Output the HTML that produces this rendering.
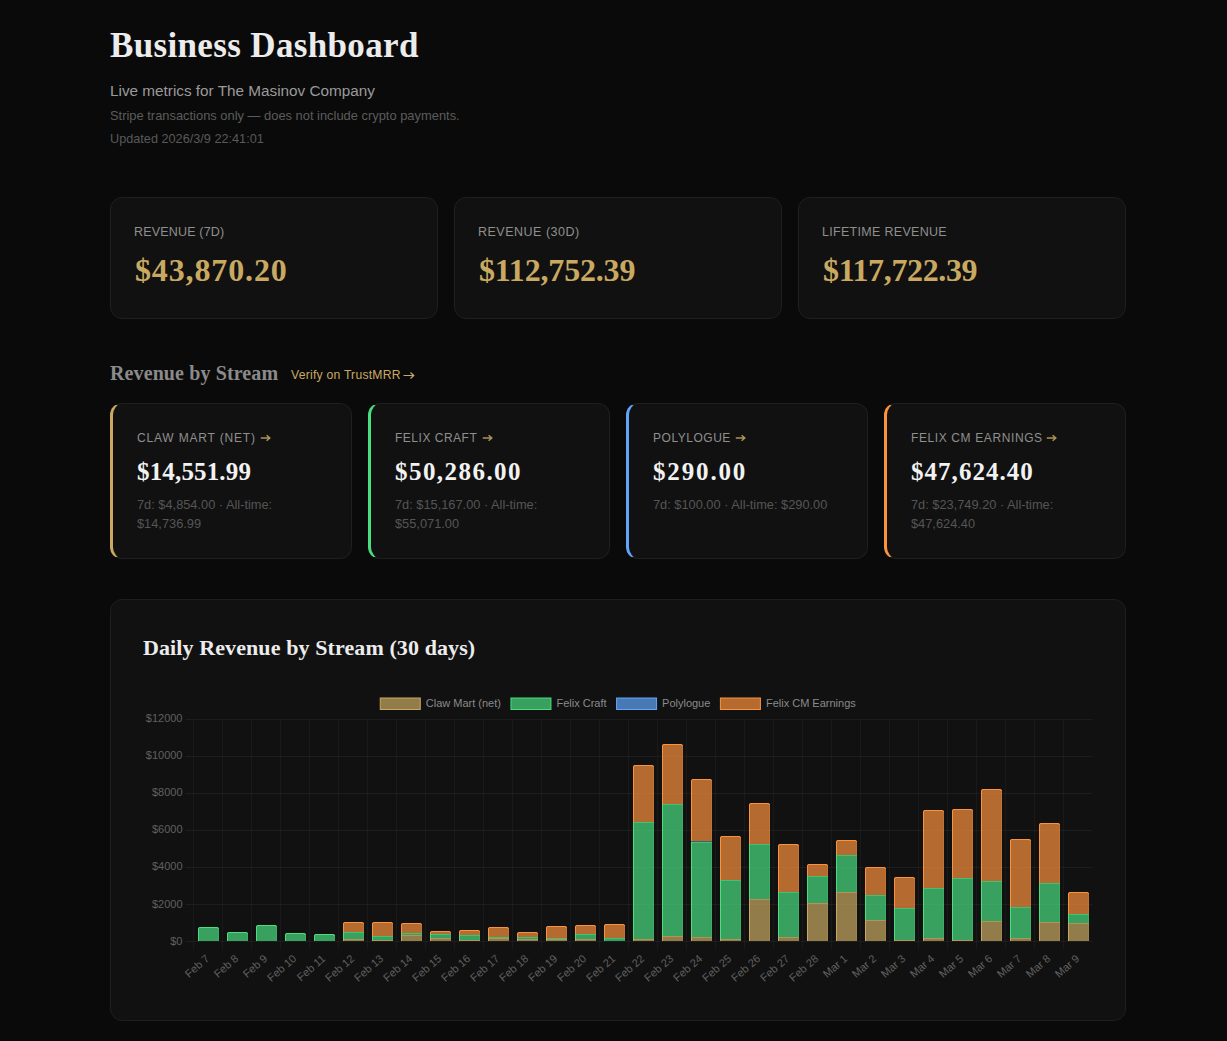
<!DOCTYPE html>
<html><head><meta charset="utf-8"><title>Business Dashboard</title>
<style>
html,body{margin:0;padding:0;background:#0a0a0a;width:1227px;height:1041px;overflow:hidden;position:relative}
.card{position:absolute;box-sizing:border-box;background:#111111;border:1px solid #1f1f1f;border-radius:12px}
.ax{font-family:'Liberation Sans', sans-serif;font-size:11px;fill:#606060}
.lg{font-family:'Liberation Sans', sans-serif;font-size:11px;fill:#8a8a8a}
</style></head><body>
<div style="position:absolute;left:110px;top:24.79px;font-family:'Liberation Serif', serif;font-size:35px;line-height:42px;color:#ececec;white-space:nowrap;font-weight:700;letter-spacing:0.35px;">Business Dashboard</div>
<div style="position:absolute;left:110px;top:81.90px;font-family:'Liberation Sans', sans-serif;font-size:15.3px;line-height:18px;color:#9a9a9a;white-space:nowrap;font-weight:400;letter-spacing:0px;">Live metrics for The Masinov Company</div>
<div style="position:absolute;left:110px;top:108.03px;font-family:'Liberation Sans', sans-serif;font-size:12.9px;line-height:15px;color:#5c5c5c;white-space:nowrap;font-weight:400;letter-spacing:0px;">Stripe transactions only — does not include crypto payments.</div>
<div style="position:absolute;left:110px;top:132.10px;font-family:'Liberation Sans', sans-serif;font-size:12.7px;line-height:15px;color:#595959;white-space:nowrap;font-weight:400;letter-spacing:0px;">Updated 2026/3/9 22:41:01</div>
<div class="card" style="left:110px;top:197px;width:328px;height:122px;"></div>
<div style="position:absolute;left:134px;top:224.67px;font-family:'Liberation Sans', sans-serif;font-size:12.5px;line-height:15px;color:#8f8f8f;white-space:nowrap;font-weight:400;letter-spacing:0.18px;">REVENUE (7D)</div>
<div style="position:absolute;left:135px;top:251.20px;font-family:'Liberation Serif', serif;font-size:32px;line-height:38px;color:#c9a961;white-space:nowrap;font-weight:700;letter-spacing:0.87px;">$43,870.20</div>
<div class="card" style="left:454px;top:197px;width:328px;height:122px;"></div>
<div style="position:absolute;left:478px;top:224.67px;font-family:'Liberation Sans', sans-serif;font-size:12.5px;line-height:15px;color:#8f8f8f;white-space:nowrap;font-weight:400;letter-spacing:0.5px;">REVENUE (30D)</div>
<div style="position:absolute;left:479px;top:251.20px;font-family:'Liberation Serif', serif;font-size:32px;line-height:38px;color:#c9a961;white-space:nowrap;font-weight:700;letter-spacing:-0.18px;">$112,752.39</div>
<div class="card" style="left:798px;top:197px;width:328px;height:122px;"></div>
<div style="position:absolute;left:822px;top:224.67px;font-family:'Liberation Sans', sans-serif;font-size:12.5px;line-height:15px;color:#8f8f8f;white-space:nowrap;font-weight:400;letter-spacing:0.3px;">LIFETIME REVENUE</div>
<div style="position:absolute;left:823px;top:251.20px;font-family:'Liberation Serif', serif;font-size:32px;line-height:38px;color:#c9a961;white-space:nowrap;font-weight:700;letter-spacing:-0.37px;">$117,722.39</div>
<div style="position:absolute;left:110px;top:360.55px;font-family:'Liberation Serif', serif;font-size:20px;line-height:24px;color:#8a8a8a;white-space:nowrap;font-weight:700;letter-spacing:0.11px;">Revenue by Stream</div>
<div style="position:absolute;left:291px;top:367.57px;font-family:'Liberation Sans', sans-serif;font-size:12.2px;line-height:15px;color:#c9a961;white-space:nowrap;font-weight:400;letter-spacing:0.23px;">Verify on TrustMRR</div>
<div style="position:absolute;left:402.6px;top:370.6px;width:12px;height:8px"><svg width="12" height="8" viewBox="0 0 12 8" style="display:block"><path d="M0.5 4.5H10.5M7.5 1.5L10.8 4.5L7.5 7.5" fill="none" stroke="#c9a961" stroke-width="1.2"/></svg></div>
<div class="card" style="left:110px;top:403px;width:242px;height:156px;border-left:3px solid #c9a961;"></div>
<div style="position:absolute;left:137px;top:431.34px;font-family:'Liberation Sans', sans-serif;font-size:12px;line-height:14px;color:#8f8f8f;white-space:nowrap;font-weight:400;letter-spacing:0.82px;">CLAW MART (NET)</div>
<div style="position:absolute;left:260.3px;top:434px;width:12px;height:8px"><svg width="12" height="8" viewBox="0 0 12 8" style="display:block"><path d="M0.8 4H9.6M6.6 1.2L9.8 4L6.6 6.8" fill="none" stroke="#c9a961" stroke-opacity="0.85" stroke-width="1.5"/></svg></div>
<div style="position:absolute;left:137px;top:456.96px;font-family:'Liberation Serif', serif;font-size:25px;line-height:30px;color:#f2f2f2;white-space:nowrap;font-weight:700;letter-spacing:0.16px;">$14,551.99</div>
<div style="position:absolute;left:137px;top:497.06px;font-family:'Liberation Sans', sans-serif;font-size:12.8px;line-height:15px;color:#555555;white-space:nowrap;font-weight:400;letter-spacing:0px;">7d: $4,854.00 · All-time:</div>
<div style="position:absolute;left:137px;top:516.06px;font-family:'Liberation Sans', sans-serif;font-size:12.8px;line-height:15px;color:#555555;white-space:nowrap;font-weight:400;letter-spacing:0px;">$14,736.99</div>
<div class="card" style="left:368px;top:403px;width:242px;height:156px;border-left:3px solid #4ade80;"></div>
<div style="position:absolute;left:395px;top:431.34px;font-family:'Liberation Sans', sans-serif;font-size:12px;line-height:14px;color:#8f8f8f;white-space:nowrap;font-weight:400;letter-spacing:0.51px;">FELIX CRAFT</div>
<div style="position:absolute;left:481.7px;top:434px;width:12px;height:8px"><svg width="12" height="8" viewBox="0 0 12 8" style="display:block"><path d="M0.8 4H9.6M6.6 1.2L9.8 4L6.6 6.8" fill="none" stroke="#c9a961" stroke-opacity="0.85" stroke-width="1.5"/></svg></div>
<div style="position:absolute;left:395px;top:456.96px;font-family:'Liberation Serif', serif;font-size:25px;line-height:30px;color:#f2f2f2;white-space:nowrap;font-weight:700;letter-spacing:1.45px;">$50,286.00</div>
<div style="position:absolute;left:395px;top:497.06px;font-family:'Liberation Sans', sans-serif;font-size:12.8px;line-height:15px;color:#555555;white-space:nowrap;font-weight:400;letter-spacing:0px;">7d: $15,167.00 · All-time:</div>
<div style="position:absolute;left:395px;top:516.06px;font-family:'Liberation Sans', sans-serif;font-size:12.8px;line-height:15px;color:#555555;white-space:nowrap;font-weight:400;letter-spacing:0px;">$55,071.00</div>
<div class="card" style="left:626px;top:403px;width:242px;height:156px;border-left:3px solid #60a5fa;"></div>
<div style="position:absolute;left:653px;top:431.34px;font-family:'Liberation Sans', sans-serif;font-size:12px;line-height:14px;color:#8f8f8f;white-space:nowrap;font-weight:400;letter-spacing:0.53px;">POLYLOGUE</div>
<div style="position:absolute;left:735.2px;top:434px;width:12px;height:8px"><svg width="12" height="8" viewBox="0 0 12 8" style="display:block"><path d="M0.8 4H9.6M6.6 1.2L9.8 4L6.6 6.8" fill="none" stroke="#c9a961" stroke-opacity="0.85" stroke-width="1.5"/></svg></div>
<div style="position:absolute;left:653px;top:456.96px;font-family:'Liberation Serif', serif;font-size:25px;line-height:30px;color:#f2f2f2;white-space:nowrap;font-weight:700;letter-spacing:1.85px;">$290.00</div>
<div style="position:absolute;left:653px;top:497.06px;font-family:'Liberation Sans', sans-serif;font-size:12.8px;line-height:15px;color:#555555;white-space:nowrap;font-weight:400;letter-spacing:0px;">7d: $100.00 · All-time: $290.00</div>
<div class="card" style="left:884px;top:403px;width:242px;height:156px;border-left:3px solid #fb923c;"></div>
<div style="position:absolute;left:911px;top:431.34px;font-family:'Liberation Sans', sans-serif;font-size:12px;line-height:14px;color:#8f8f8f;white-space:nowrap;font-weight:400;letter-spacing:0.61px;">FELIX CM EARNINGS</div>
<div style="position:absolute;left:1046.4px;top:434px;width:12px;height:8px"><svg width="12" height="8" viewBox="0 0 12 8" style="display:block"><path d="M0.8 4H9.6M6.6 1.2L9.8 4L6.6 6.8" fill="none" stroke="#c9a961" stroke-opacity="0.85" stroke-width="1.5"/></svg></div>
<div style="position:absolute;left:911px;top:456.96px;font-family:'Liberation Serif', serif;font-size:25px;line-height:30px;color:#f2f2f2;white-space:nowrap;font-weight:700;letter-spacing:1.04px;">$47,624.40</div>
<div style="position:absolute;left:911px;top:497.06px;font-family:'Liberation Sans', sans-serif;font-size:12.8px;line-height:15px;color:#555555;white-space:nowrap;font-weight:400;letter-spacing:0px;">7d: $23,749.20 · All-time:</div>
<div style="position:absolute;left:911px;top:516.06px;font-family:'Liberation Sans', sans-serif;font-size:12.8px;line-height:15px;color:#555555;white-space:nowrap;font-weight:400;letter-spacing:0px;">$47,624.40</div>
<div class="card" style="left:110px;top:599px;width:1016px;height:422px;"></div>
<div style="position:absolute;left:143px;top:634.68px;font-family:'Liberation Serif', serif;font-size:22px;line-height:26px;color:#ececec;white-space:nowrap;font-weight:700;letter-spacing:0.1px;">Daily Revenue by Stream (30 days)</div>
<svg width="1227" height="1041" viewBox="0 0 1227 1041" style="position:absolute;left:0;top:0">
<line x1="185.5" x2="1092.5" y1="941.5" y2="941.5" stroke="rgba(255,255,255,0.05)" stroke-width="1"/>
<text x="182.5" y="945.3" text-anchor="end" class="ax">$0</text>
<line x1="185.5" x2="1092.5" y1="904.5" y2="904.5" stroke="rgba(255,255,255,0.05)" stroke-width="1"/>
<text x="182.5" y="908.4" text-anchor="end" class="ax">$2000</text>
<line x1="185.5" x2="1092.5" y1="867.5" y2="867.5" stroke="rgba(255,255,255,0.05)" stroke-width="1"/>
<text x="182.5" y="869.5" text-anchor="end" class="ax">$4000</text>
<line x1="185.5" x2="1092.5" y1="830.5" y2="830.5" stroke="rgba(255,255,255,0.05)" stroke-width="1"/>
<text x="182.5" y="832.6" text-anchor="end" class="ax">$6000</text>
<line x1="185.5" x2="1092.5" y1="793.5" y2="793.5" stroke="rgba(255,255,255,0.05)" stroke-width="1"/>
<text x="182.5" y="795.6" text-anchor="end" class="ax">$8000</text>
<line x1="185.5" x2="1092.5" y1="756.5" y2="756.5" stroke="rgba(255,255,255,0.05)" stroke-width="1"/>
<text x="182.5" y="758.7" text-anchor="end" class="ax">$10000</text>
<line x1="185.5" x2="1092.5" y1="719.5" y2="719.5" stroke="rgba(255,255,255,0.05)" stroke-width="1"/>
<text x="182.5" y="721.8" text-anchor="end" class="ax">$12000</text>
<line x1="193.5" x2="193.5" y1="719.6" y2="949.5" stroke="rgba(255,255,255,0.035)" stroke-width="1"/>
<line x1="222.5" x2="222.5" y1="719.6" y2="949.5" stroke="rgba(255,255,255,0.035)" stroke-width="1"/>
<line x1="251.5" x2="251.5" y1="719.6" y2="949.5" stroke="rgba(255,255,255,0.035)" stroke-width="1"/>
<line x1="280.5" x2="280.5" y1="719.6" y2="949.5" stroke="rgba(255,255,255,0.035)" stroke-width="1"/>
<line x1="309.5" x2="309.5" y1="719.6" y2="949.5" stroke="rgba(255,255,255,0.035)" stroke-width="1"/>
<line x1="338.5" x2="338.5" y1="719.6" y2="949.5" stroke="rgba(255,255,255,0.035)" stroke-width="1"/>
<line x1="367.5" x2="367.5" y1="719.6" y2="949.5" stroke="rgba(255,255,255,0.035)" stroke-width="1"/>
<line x1="396.5" x2="396.5" y1="719.6" y2="949.5" stroke="rgba(255,255,255,0.035)" stroke-width="1"/>
<line x1="425.5" x2="425.5" y1="719.6" y2="949.5" stroke="rgba(255,255,255,0.035)" stroke-width="1"/>
<line x1="454.5" x2="454.5" y1="719.6" y2="949.5" stroke="rgba(255,255,255,0.035)" stroke-width="1"/>
<line x1="483.5" x2="483.5" y1="719.6" y2="949.5" stroke="rgba(255,255,255,0.035)" stroke-width="1"/>
<line x1="512.5" x2="512.5" y1="719.6" y2="949.5" stroke="rgba(255,255,255,0.035)" stroke-width="1"/>
<line x1="541.5" x2="541.5" y1="719.6" y2="949.5" stroke="rgba(255,255,255,0.035)" stroke-width="1"/>
<line x1="570.5" x2="570.5" y1="719.6" y2="949.5" stroke="rgba(255,255,255,0.035)" stroke-width="1"/>
<line x1="599.5" x2="599.5" y1="719.6" y2="949.5" stroke="rgba(255,255,255,0.035)" stroke-width="1"/>
<line x1="628.5" x2="628.5" y1="719.6" y2="949.5" stroke="rgba(255,255,255,0.035)" stroke-width="1"/>
<line x1="657.5" x2="657.5" y1="719.6" y2="949.5" stroke="rgba(255,255,255,0.035)" stroke-width="1"/>
<line x1="686.5" x2="686.5" y1="719.6" y2="949.5" stroke="rgba(255,255,255,0.035)" stroke-width="1"/>
<line x1="715.5" x2="715.5" y1="719.6" y2="949.5" stroke="rgba(255,255,255,0.035)" stroke-width="1"/>
<line x1="744.5" x2="744.5" y1="719.6" y2="949.5" stroke="rgba(255,255,255,0.035)" stroke-width="1"/>
<line x1="773.5" x2="773.5" y1="719.6" y2="949.5" stroke="rgba(255,255,255,0.035)" stroke-width="1"/>
<line x1="802.5" x2="802.5" y1="719.6" y2="949.5" stroke="rgba(255,255,255,0.035)" stroke-width="1"/>
<line x1="831.5" x2="831.5" y1="719.6" y2="949.5" stroke="rgba(255,255,255,0.035)" stroke-width="1"/>
<line x1="860.5" x2="860.5" y1="719.6" y2="949.5" stroke="rgba(255,255,255,0.035)" stroke-width="1"/>
<line x1="889.5" x2="889.5" y1="719.6" y2="949.5" stroke="rgba(255,255,255,0.035)" stroke-width="1"/>
<line x1="918.5" x2="918.5" y1="719.6" y2="949.5" stroke="rgba(255,255,255,0.035)" stroke-width="1"/>
<line x1="947.5" x2="947.5" y1="719.6" y2="949.5" stroke="rgba(255,255,255,0.035)" stroke-width="1"/>
<line x1="976.5" x2="976.5" y1="719.6" y2="949.5" stroke="rgba(255,255,255,0.035)" stroke-width="1"/>
<line x1="1005.5" x2="1005.5" y1="719.6" y2="949.5" stroke="rgba(255,255,255,0.035)" stroke-width="1"/>
<line x1="1034.5" x2="1034.5" y1="719.6" y2="949.5" stroke="rgba(255,255,255,0.035)" stroke-width="1"/>
<line x1="1063.5" x2="1063.5" y1="719.6" y2="949.5" stroke="rgba(255,255,255,0.035)" stroke-width="1"/>
<path d="M198.00,941.00V929.00Q198.00,927.00 200.00,927.00H217.00Q219.00,927.00 219.00,929.00V941.00Z" fill="rgba(74,222,128,0.7)"/>
<path d="M198.5,941V929.0Q198.5,927.5 200.0,927.5H217.0Q218.5,927.5 218.5,929.0" fill="none" stroke="#4ade80" stroke-width="1"/>
<line x1="218.5" x2="218.5" y1="929.5" y2="941" stroke="#4ade80" stroke-opacity="0.2" stroke-width="1"/>
<text transform="translate(210.2,959.7) rotate(-41)" text-anchor="end" class="ax">Feb 7</text>
<path d="M227.00,941.00V934.00Q227.00,932.00 229.00,932.00H246.00Q248.00,932.00 248.00,934.00V941.00Z" fill="rgba(74,222,128,0.7)"/>
<path d="M227.5,941V934.0Q227.5,932.5 229.0,932.5H246.0Q247.5,932.5 247.5,934.0" fill="none" stroke="#4ade80" stroke-width="1"/>
<line x1="247.5" x2="247.5" y1="934.5" y2="941" stroke="#4ade80" stroke-opacity="0.2" stroke-width="1"/>
<text transform="translate(239.2,959.7) rotate(-41)" text-anchor="end" class="ax">Feb 8</text>
<path d="M256.00,941.00V927.00Q256.00,925.00 258.00,925.00H275.00Q277.00,925.00 277.00,927.00V941.00Z" fill="rgba(74,222,128,0.7)"/>
<path d="M256.5,941V927.0Q256.5,925.5 258.0,925.5H275.0Q276.5,925.5 276.5,927.0" fill="none" stroke="#4ade80" stroke-width="1"/>
<line x1="276.5" x2="276.5" y1="927.5" y2="941" stroke="#4ade80" stroke-opacity="0.2" stroke-width="1"/>
<text transform="translate(268.2,959.7) rotate(-41)" text-anchor="end" class="ax">Feb 9</text>
<path d="M285.00,941.00V935.00Q285.00,933.00 287.00,933.00H304.00Q306.00,933.00 306.00,935.00V941.00Z" fill="rgba(74,222,128,0.7)"/>
<path d="M285.5,941V935.0Q285.5,933.5 287.0,933.5H304.0Q305.5,933.5 305.5,935.0" fill="none" stroke="#4ade80" stroke-width="1"/>
<line x1="305.5" x2="305.5" y1="935.5" y2="941" stroke="#4ade80" stroke-opacity="0.2" stroke-width="1"/>
<text transform="translate(297.2,959.7) rotate(-41)" text-anchor="end" class="ax">Feb 10</text>
<path d="M314.00,941.00V936.00Q314.00,934.00 316.00,934.00H333.00Q335.00,934.00 335.00,936.00V941.00Z" fill="rgba(74,222,128,0.7)"/>
<path d="M314.5,941V936.0Q314.5,934.5 316.0,934.5H333.0Q334.5,934.5 334.5,936.0" fill="none" stroke="#4ade80" stroke-width="1"/>
<line x1="334.5" x2="334.5" y1="936.5" y2="941" stroke="#4ade80" stroke-opacity="0.2" stroke-width="1"/>
<text transform="translate(326.2,959.7) rotate(-41)" text-anchor="end" class="ax">Feb 11</text>
<path d="M343.00,941.00V939.00H364.00V941.00Z" fill="rgba(201,169,97,0.7)"/>
<line x1="343.5" x2="343.5" y1="939.0" y2="941" stroke="#c9a961" stroke-width="1"/>
<line x1="344.0" x2="364.0" y1="939.5" y2="939.5" stroke="#c9a961" stroke-opacity="0.55" stroke-width="1"/>
<line x1="363.5" x2="363.5" y1="939.5" y2="941" stroke="#c9a961" stroke-opacity="0.2" stroke-width="1"/>
<path d="M343.00,939.00V932.00H364.00V939.00Z" fill="rgba(74,222,128,0.7)"/>
<line x1="343.5" x2="343.5" y1="932.0" y2="939" stroke="#4ade80" stroke-width="1"/>
<line x1="344.0" x2="364.0" y1="932.5" y2="932.5" stroke="#4ade80" stroke-opacity="0.55" stroke-width="1"/>
<line x1="363.5" x2="363.5" y1="932.5" y2="939" stroke="#4ade80" stroke-opacity="0.2" stroke-width="1"/>
<path d="M343.00,932.00V924.00Q343.00,922.00 345.00,922.00H362.00Q364.00,922.00 364.00,924.00V932.00Z" fill="rgba(251,146,60,0.7)"/>
<path d="M343.5,932V924.0Q343.5,922.5 345.0,922.5H362.0Q363.5,922.5 363.5,924.0" fill="none" stroke="#fb923c" stroke-width="1"/>
<line x1="363.5" x2="363.5" y1="924.5" y2="932" stroke="#fb923c" stroke-opacity="0.2" stroke-width="1"/>
<text transform="translate(355.2,959.7) rotate(-41)" text-anchor="end" class="ax">Feb 12</text>
<path d="M372.00,941.00V940.00H393.00V941.00Z" fill="rgba(201,169,97,0.7)"/>
<line x1="372.5" x2="372.5" y1="940.0" y2="941" stroke="#c9a961" stroke-width="1"/>
<line x1="373.0" x2="393.0" y1="940.5" y2="940.5" stroke="#c9a961" stroke-opacity="0.55" stroke-width="1"/>
<line x1="392.5" x2="392.5" y1="940.5" y2="941" stroke="#c9a961" stroke-opacity="0.2" stroke-width="1"/>
<path d="M372.00,940.00V936.00H393.00V940.00Z" fill="rgba(74,222,128,0.7)"/>
<line x1="372.5" x2="372.5" y1="936.0" y2="940" stroke="#4ade80" stroke-width="1"/>
<line x1="373.0" x2="393.0" y1="936.5" y2="936.5" stroke="#4ade80" stroke-opacity="0.55" stroke-width="1"/>
<line x1="392.5" x2="392.5" y1="936.5" y2="940" stroke="#4ade80" stroke-opacity="0.2" stroke-width="1"/>
<path d="M372.00,936.00V924.00Q372.00,922.00 374.00,922.00H391.00Q393.00,922.00 393.00,924.00V936.00Z" fill="rgba(251,146,60,0.7)"/>
<path d="M372.5,936V924.0Q372.5,922.5 374.0,922.5H391.0Q392.5,922.5 392.5,924.0" fill="none" stroke="#fb923c" stroke-width="1"/>
<line x1="392.5" x2="392.5" y1="924.5" y2="936" stroke="#fb923c" stroke-opacity="0.2" stroke-width="1"/>
<text transform="translate(384.2,959.7) rotate(-41)" text-anchor="end" class="ax">Feb 13</text>
<path d="M401.00,941.00V935.00H422.00V941.00Z" fill="rgba(201,169,97,0.7)"/>
<line x1="401.5" x2="401.5" y1="935.0" y2="941" stroke="#c9a961" stroke-width="1"/>
<line x1="402.0" x2="422.0" y1="935.5" y2="935.5" stroke="#c9a961" stroke-opacity="0.55" stroke-width="1"/>
<line x1="421.5" x2="421.5" y1="935.5" y2="941" stroke="#c9a961" stroke-opacity="0.2" stroke-width="1"/>
<path d="M401.00,935.00V933.00H422.00V935.00Z" fill="rgba(74,222,128,0.7)"/>
<line x1="401.5" x2="401.5" y1="933.0" y2="935" stroke="#4ade80" stroke-width="1"/>
<line x1="402.0" x2="422.0" y1="933.5" y2="933.5" stroke="#4ade80" stroke-opacity="0.55" stroke-width="1"/>
<line x1="421.5" x2="421.5" y1="933.5" y2="935" stroke="#4ade80" stroke-opacity="0.2" stroke-width="1"/>
<path d="M401.00,933.00V925.00Q401.00,923.00 403.00,923.00H420.00Q422.00,923.00 422.00,925.00V933.00Z" fill="rgba(251,146,60,0.7)"/>
<path d="M401.5,933V925.0Q401.5,923.5 403.0,923.5H420.0Q421.5,923.5 421.5,925.0" fill="none" stroke="#fb923c" stroke-width="1"/>
<line x1="421.5" x2="421.5" y1="925.5" y2="933" stroke="#fb923c" stroke-opacity="0.2" stroke-width="1"/>
<text transform="translate(413.2,959.7) rotate(-41)" text-anchor="end" class="ax">Feb 14</text>
<path d="M430.00,941.00V938.00H451.00V941.00Z" fill="rgba(201,169,97,0.7)"/>
<line x1="430.5" x2="430.5" y1="938.0" y2="941" stroke="#c9a961" stroke-width="1"/>
<line x1="431.0" x2="451.0" y1="938.5" y2="938.5" stroke="#c9a961" stroke-opacity="0.55" stroke-width="1"/>
<line x1="450.5" x2="450.5" y1="938.5" y2="941" stroke="#c9a961" stroke-opacity="0.2" stroke-width="1"/>
<path d="M430.00,938.00V934.00H451.00V938.00Z" fill="rgba(74,222,128,0.7)"/>
<line x1="430.5" x2="430.5" y1="934.0" y2="938" stroke="#4ade80" stroke-width="1"/>
<line x1="431.0" x2="451.0" y1="934.5" y2="934.5" stroke="#4ade80" stroke-opacity="0.55" stroke-width="1"/>
<line x1="450.5" x2="450.5" y1="934.5" y2="938" stroke="#4ade80" stroke-opacity="0.2" stroke-width="1"/>
<path d="M430.00,934.00V933.00Q430.00,931.00 432.00,931.00H449.00Q451.00,931.00 451.00,933.00V934.00Z" fill="rgba(251,146,60,0.7)"/>
<path d="M430.5,934V933.0Q430.5,931.5 432.0,931.5H449.0Q450.5,931.5 450.5,933.0" fill="none" stroke="#fb923c" stroke-width="1"/>
<line x1="450.5" x2="450.5" y1="933.5" y2="934" stroke="#fb923c" stroke-opacity="0.2" stroke-width="1"/>
<text transform="translate(442.2,959.7) rotate(-41)" text-anchor="end" class="ax">Feb 15</text>
<path d="M459.00,941.00V940.00H480.00V941.00Z" fill="rgba(201,169,97,0.7)"/>
<line x1="459.5" x2="459.5" y1="940.0" y2="941" stroke="#c9a961" stroke-width="1"/>
<line x1="460.0" x2="480.0" y1="940.5" y2="940.5" stroke="#c9a961" stroke-opacity="0.55" stroke-width="1"/>
<line x1="479.5" x2="479.5" y1="940.5" y2="941" stroke="#c9a961" stroke-opacity="0.2" stroke-width="1"/>
<path d="M459.00,940.00V935.00H480.00V940.00Z" fill="rgba(74,222,128,0.7)"/>
<line x1="459.5" x2="459.5" y1="935.0" y2="940" stroke="#4ade80" stroke-width="1"/>
<line x1="460.0" x2="480.0" y1="935.5" y2="935.5" stroke="#4ade80" stroke-opacity="0.55" stroke-width="1"/>
<line x1="479.5" x2="479.5" y1="935.5" y2="940" stroke="#4ade80" stroke-opacity="0.2" stroke-width="1"/>
<path d="M459.00,935.00V932.00Q459.00,930.00 461.00,930.00H478.00Q480.00,930.00 480.00,932.00V935.00Z" fill="rgba(251,146,60,0.7)"/>
<path d="M459.5,935V932.0Q459.5,930.5 461.0,930.5H478.0Q479.5,930.5 479.5,932.0" fill="none" stroke="#fb923c" stroke-width="1"/>
<line x1="479.5" x2="479.5" y1="932.5" y2="935" stroke="#fb923c" stroke-opacity="0.2" stroke-width="1"/>
<text transform="translate(471.2,959.7) rotate(-41)" text-anchor="end" class="ax">Feb 16</text>
<path d="M488.00,941.00V938.00H509.00V941.00Z" fill="rgba(201,169,97,0.7)"/>
<line x1="488.5" x2="488.5" y1="938.0" y2="941" stroke="#c9a961" stroke-width="1"/>
<line x1="489.0" x2="509.0" y1="938.5" y2="938.5" stroke="#c9a961" stroke-opacity="0.55" stroke-width="1"/>
<line x1="508.5" x2="508.5" y1="938.5" y2="941" stroke="#c9a961" stroke-opacity="0.2" stroke-width="1"/>
<path d="M488.00,938.00V937.00H509.00V938.00Z" fill="rgba(74,222,128,0.7)"/>
<line x1="488.5" x2="488.5" y1="937.0" y2="938" stroke="#4ade80" stroke-width="1"/>
<line x1="489.0" x2="509.0" y1="937.5" y2="937.5" stroke="#4ade80" stroke-opacity="0.55" stroke-width="1"/>
<line x1="508.5" x2="508.5" y1="937.5" y2="938" stroke="#4ade80" stroke-opacity="0.2" stroke-width="1"/>
<path d="M488.00,937.00V929.00Q488.00,927.00 490.00,927.00H507.00Q509.00,927.00 509.00,929.00V937.00Z" fill="rgba(251,146,60,0.7)"/>
<path d="M488.5,937V929.0Q488.5,927.5 490.0,927.5H507.0Q508.5,927.5 508.5,929.0" fill="none" stroke="#fb923c" stroke-width="1"/>
<line x1="508.5" x2="508.5" y1="929.5" y2="937" stroke="#fb923c" stroke-opacity="0.2" stroke-width="1"/>
<text transform="translate(500.2,959.7) rotate(-41)" text-anchor="end" class="ax">Feb 17</text>
<path d="M517.00,941.00V939.00H538.00V941.00Z" fill="rgba(201,169,97,0.7)"/>
<line x1="517.5" x2="517.5" y1="939.0" y2="941" stroke="#c9a961" stroke-width="1"/>
<line x1="518.0" x2="538.0" y1="939.5" y2="939.5" stroke="#c9a961" stroke-opacity="0.55" stroke-width="1"/>
<line x1="537.5" x2="537.5" y1="939.5" y2="941" stroke="#c9a961" stroke-opacity="0.2" stroke-width="1"/>
<path d="M517.00,939.00V937.00H538.00V939.00Z" fill="rgba(74,222,128,0.7)"/>
<line x1="517.5" x2="517.5" y1="937.0" y2="939" stroke="#4ade80" stroke-width="1"/>
<line x1="518.0" x2="538.0" y1="937.5" y2="937.5" stroke="#4ade80" stroke-opacity="0.55" stroke-width="1"/>
<line x1="537.5" x2="537.5" y1="937.5" y2="939" stroke="#4ade80" stroke-opacity="0.2" stroke-width="1"/>
<path d="M517.00,937.00V934.00Q517.00,932.00 519.00,932.00H536.00Q538.00,932.00 538.00,934.00V937.00Z" fill="rgba(251,146,60,0.7)"/>
<path d="M517.5,937V934.0Q517.5,932.5 519.0,932.5H536.0Q537.5,932.5 537.5,934.0" fill="none" stroke="#fb923c" stroke-width="1"/>
<line x1="537.5" x2="537.5" y1="934.5" y2="937" stroke="#fb923c" stroke-opacity="0.2" stroke-width="1"/>
<text transform="translate(529.2,959.7) rotate(-41)" text-anchor="end" class="ax">Feb 18</text>
<path d="M546.00,941.00V939.00H567.00V941.00Z" fill="rgba(201,169,97,0.7)"/>
<line x1="546.5" x2="546.5" y1="939.0" y2="941" stroke="#c9a961" stroke-width="1"/>
<line x1="547.0" x2="567.0" y1="939.5" y2="939.5" stroke="#c9a961" stroke-opacity="0.55" stroke-width="1"/>
<line x1="566.5" x2="566.5" y1="939.5" y2="941" stroke="#c9a961" stroke-opacity="0.2" stroke-width="1"/>
<path d="M546.00,939.00V938.00H567.00V939.00Z" fill="rgba(74,222,128,0.7)"/>
<line x1="546.5" x2="546.5" y1="938.0" y2="939" stroke="#4ade80" stroke-width="1"/>
<line x1="547.0" x2="567.0" y1="938.5" y2="938.5" stroke="#4ade80" stroke-opacity="0.55" stroke-width="1"/>
<line x1="566.5" x2="566.5" y1="938.5" y2="939" stroke="#4ade80" stroke-opacity="0.2" stroke-width="1"/>
<path d="M546.00,938.00V928.00Q546.00,926.00 548.00,926.00H565.00Q567.00,926.00 567.00,928.00V938.00Z" fill="rgba(251,146,60,0.7)"/>
<path d="M546.5,938V928.0Q546.5,926.5 548.0,926.5H565.0Q566.5,926.5 566.5,928.0" fill="none" stroke="#fb923c" stroke-width="1"/>
<line x1="566.5" x2="566.5" y1="928.5" y2="938" stroke="#fb923c" stroke-opacity="0.2" stroke-width="1"/>
<text transform="translate(558.2,959.7) rotate(-41)" text-anchor="end" class="ax">Feb 19</text>
<path d="M575.00,941.00V939.00H596.00V941.00Z" fill="rgba(201,169,97,0.7)"/>
<line x1="575.5" x2="575.5" y1="939.0" y2="941" stroke="#c9a961" stroke-width="1"/>
<line x1="576.0" x2="596.0" y1="939.5" y2="939.5" stroke="#c9a961" stroke-opacity="0.55" stroke-width="1"/>
<line x1="595.5" x2="595.5" y1="939.5" y2="941" stroke="#c9a961" stroke-opacity="0.2" stroke-width="1"/>
<path d="M575.00,939.00V934.00H596.00V939.00Z" fill="rgba(74,222,128,0.7)"/>
<line x1="575.5" x2="575.5" y1="934.0" y2="939" stroke="#4ade80" stroke-width="1"/>
<line x1="576.0" x2="596.0" y1="934.5" y2="934.5" stroke="#4ade80" stroke-opacity="0.55" stroke-width="1"/>
<line x1="595.5" x2="595.5" y1="934.5" y2="939" stroke="#4ade80" stroke-opacity="0.2" stroke-width="1"/>
<path d="M575.00,934.00V927.00Q575.00,925.00 577.00,925.00H594.00Q596.00,925.00 596.00,927.00V934.00Z" fill="rgba(251,146,60,0.7)"/>
<path d="M575.5,934V927.0Q575.5,925.5 577.0,925.5H594.0Q595.5,925.5 595.5,927.0" fill="none" stroke="#fb923c" stroke-width="1"/>
<line x1="595.5" x2="595.5" y1="927.5" y2="934" stroke="#fb923c" stroke-opacity="0.2" stroke-width="1"/>
<text transform="translate(587.2,959.7) rotate(-41)" text-anchor="end" class="ax">Feb 20</text>
<path d="M604.00,941.00V938.00H625.00V941.00Z" fill="rgba(74,222,128,0.7)"/>
<line x1="604.5" x2="604.5" y1="938.0" y2="941" stroke="#4ade80" stroke-width="1"/>
<line x1="605.0" x2="625.0" y1="938.5" y2="938.5" stroke="#4ade80" stroke-opacity="0.55" stroke-width="1"/>
<line x1="624.5" x2="624.5" y1="938.5" y2="941" stroke="#4ade80" stroke-opacity="0.2" stroke-width="1"/>
<path d="M604.00,938.00V926.00Q604.00,924.00 606.00,924.00H623.00Q625.00,924.00 625.00,926.00V938.00Z" fill="rgba(251,146,60,0.7)"/>
<path d="M604.5,938V926.0Q604.5,924.5 606.0,924.5H623.0Q624.5,924.5 624.5,926.0" fill="none" stroke="#fb923c" stroke-width="1"/>
<line x1="624.5" x2="624.5" y1="926.5" y2="938" stroke="#fb923c" stroke-opacity="0.2" stroke-width="1"/>
<text transform="translate(616.2,959.7) rotate(-41)" text-anchor="end" class="ax">Feb 21</text>
<path d="M633.00,941.00V939.00H654.00V941.00Z" fill="rgba(201,169,97,0.7)"/>
<line x1="633.5" x2="633.5" y1="939.0" y2="941" stroke="#c9a961" stroke-width="1"/>
<line x1="634.0" x2="654.0" y1="939.5" y2="939.5" stroke="#c9a961" stroke-opacity="0.55" stroke-width="1"/>
<line x1="653.5" x2="653.5" y1="939.5" y2="941" stroke="#c9a961" stroke-opacity="0.2" stroke-width="1"/>
<path d="M633.00,939.00V822.00H654.00V939.00Z" fill="rgba(74,222,128,0.7)"/>
<line x1="633.5" x2="633.5" y1="822.0" y2="939" stroke="#4ade80" stroke-width="1"/>
<line x1="634.0" x2="654.0" y1="822.5" y2="822.5" stroke="#4ade80" stroke-opacity="0.55" stroke-width="1"/>
<line x1="653.5" x2="653.5" y1="822.5" y2="939" stroke="#4ade80" stroke-opacity="0.2" stroke-width="1"/>
<path d="M633.00,822.00V767.00Q633.00,765.00 635.00,765.00H652.00Q654.00,765.00 654.00,767.00V822.00Z" fill="rgba(251,146,60,0.7)"/>
<path d="M633.5,822V767.0Q633.5,765.5 635.0,765.5H652.0Q653.5,765.5 653.5,767.0" fill="none" stroke="#fb923c" stroke-width="1"/>
<line x1="653.5" x2="653.5" y1="767.5" y2="822" stroke="#fb923c" stroke-opacity="0.2" stroke-width="1"/>
<text transform="translate(645.2,959.7) rotate(-41)" text-anchor="end" class="ax">Feb 22</text>
<path d="M662.00,941.00V936.00H683.00V941.00Z" fill="rgba(201,169,97,0.7)"/>
<line x1="662.5" x2="662.5" y1="936.0" y2="941" stroke="#c9a961" stroke-width="1"/>
<line x1="663.0" x2="683.0" y1="936.5" y2="936.5" stroke="#c9a961" stroke-opacity="0.55" stroke-width="1"/>
<line x1="682.5" x2="682.5" y1="936.5" y2="941" stroke="#c9a961" stroke-opacity="0.2" stroke-width="1"/>
<path d="M662.00,936.00V804.00H683.00V936.00Z" fill="rgba(74,222,128,0.7)"/>
<line x1="662.5" x2="662.5" y1="804.0" y2="936" stroke="#4ade80" stroke-width="1"/>
<line x1="663.0" x2="683.0" y1="804.5" y2="804.5" stroke="#4ade80" stroke-opacity="0.55" stroke-width="1"/>
<line x1="682.5" x2="682.5" y1="804.5" y2="936" stroke="#4ade80" stroke-opacity="0.2" stroke-width="1"/>
<path d="M662.00,804.00V746.00Q662.00,744.00 664.00,744.00H681.00Q683.00,744.00 683.00,746.00V804.00Z" fill="rgba(251,146,60,0.7)"/>
<path d="M662.5,804V746.0Q662.5,744.5 664.0,744.5H681.0Q682.5,744.5 682.5,746.0" fill="none" stroke="#fb923c" stroke-width="1"/>
<line x1="682.5" x2="682.5" y1="746.5" y2="804" stroke="#fb923c" stroke-opacity="0.2" stroke-width="1"/>
<text transform="translate(674.2,959.7) rotate(-41)" text-anchor="end" class="ax">Feb 23</text>
<path d="M691.00,941.00V937.00H712.00V941.00Z" fill="rgba(201,169,97,0.7)"/>
<line x1="691.5" x2="691.5" y1="937.0" y2="941" stroke="#c9a961" stroke-width="1"/>
<line x1="692.0" x2="712.0" y1="937.5" y2="937.5" stroke="#c9a961" stroke-opacity="0.55" stroke-width="1"/>
<line x1="711.5" x2="711.5" y1="937.5" y2="941" stroke="#c9a961" stroke-opacity="0.2" stroke-width="1"/>
<path d="M691.00,937.00V842.00H712.00V937.00Z" fill="rgba(74,222,128,0.7)"/>
<line x1="691.5" x2="691.5" y1="842.0" y2="937" stroke="#4ade80" stroke-width="1"/>
<line x1="692.0" x2="712.0" y1="842.5" y2="842.5" stroke="#4ade80" stroke-opacity="0.55" stroke-width="1"/>
<line x1="711.5" x2="711.5" y1="842.5" y2="937" stroke="#4ade80" stroke-opacity="0.2" stroke-width="1"/>
<path d="M691.00,842.00V781.00Q691.00,779.00 693.00,779.00H710.00Q712.00,779.00 712.00,781.00V842.00Z" fill="rgba(251,146,60,0.7)"/>
<path d="M691.5,842V781.0Q691.5,779.5 693.0,779.5H710.0Q711.5,779.5 711.5,781.0" fill="none" stroke="#fb923c" stroke-width="1"/>
<line x1="711.5" x2="711.5" y1="781.5" y2="842" stroke="#fb923c" stroke-opacity="0.2" stroke-width="1"/>
<rect x="691" y="841" width="21" height="1" fill="#38607a"/>
<text transform="translate(703.2,959.7) rotate(-41)" text-anchor="end" class="ax">Feb 24</text>
<path d="M720.00,941.00V939.00H741.00V941.00Z" fill="rgba(201,169,97,0.7)"/>
<line x1="720.5" x2="720.5" y1="939.0" y2="941" stroke="#c9a961" stroke-width="1"/>
<line x1="721.0" x2="741.0" y1="939.5" y2="939.5" stroke="#c9a961" stroke-opacity="0.55" stroke-width="1"/>
<line x1="740.5" x2="740.5" y1="939.5" y2="941" stroke="#c9a961" stroke-opacity="0.2" stroke-width="1"/>
<path d="M720.00,939.00V880.00H741.00V939.00Z" fill="rgba(74,222,128,0.7)"/>
<line x1="720.5" x2="720.5" y1="880.0" y2="939" stroke="#4ade80" stroke-width="1"/>
<line x1="721.0" x2="741.0" y1="880.5" y2="880.5" stroke="#4ade80" stroke-opacity="0.55" stroke-width="1"/>
<line x1="740.5" x2="740.5" y1="880.5" y2="939" stroke="#4ade80" stroke-opacity="0.2" stroke-width="1"/>
<path d="M720.00,880.00V838.00Q720.00,836.00 722.00,836.00H739.00Q741.00,836.00 741.00,838.00V880.00Z" fill="rgba(251,146,60,0.7)"/>
<path d="M720.5,880V838.0Q720.5,836.5 722.0,836.5H739.0Q740.5,836.5 740.5,838.0" fill="none" stroke="#fb923c" stroke-width="1"/>
<line x1="740.5" x2="740.5" y1="838.5" y2="880" stroke="#fb923c" stroke-opacity="0.2" stroke-width="1"/>
<text transform="translate(732.2,959.7) rotate(-41)" text-anchor="end" class="ax">Feb 25</text>
<path d="M749.00,941.00V899.00H770.00V941.00Z" fill="rgba(201,169,97,0.7)"/>
<line x1="749.5" x2="749.5" y1="899.0" y2="941" stroke="#c9a961" stroke-width="1"/>
<line x1="750.0" x2="770.0" y1="899.5" y2="899.5" stroke="#c9a961" stroke-opacity="0.55" stroke-width="1"/>
<line x1="769.5" x2="769.5" y1="899.5" y2="941" stroke="#c9a961" stroke-opacity="0.2" stroke-width="1"/>
<path d="M749.00,899.00V844.00H770.00V899.00Z" fill="rgba(74,222,128,0.7)"/>
<line x1="749.5" x2="749.5" y1="844.0" y2="899" stroke="#4ade80" stroke-width="1"/>
<line x1="750.0" x2="770.0" y1="844.5" y2="844.5" stroke="#4ade80" stroke-opacity="0.55" stroke-width="1"/>
<line x1="769.5" x2="769.5" y1="844.5" y2="899" stroke="#4ade80" stroke-opacity="0.2" stroke-width="1"/>
<path d="M749.00,844.00V805.00Q749.00,803.00 751.00,803.00H768.00Q770.00,803.00 770.00,805.00V844.00Z" fill="rgba(251,146,60,0.7)"/>
<path d="M749.5,844V805.0Q749.5,803.5 751.0,803.5H768.0Q769.5,803.5 769.5,805.0" fill="none" stroke="#fb923c" stroke-width="1"/>
<line x1="769.5" x2="769.5" y1="805.5" y2="844" stroke="#fb923c" stroke-opacity="0.2" stroke-width="1"/>
<text transform="translate(761.2,959.7) rotate(-41)" text-anchor="end" class="ax">Feb 26</text>
<path d="M778.00,941.00V937.00H799.00V941.00Z" fill="rgba(201,169,97,0.7)"/>
<line x1="778.5" x2="778.5" y1="937.0" y2="941" stroke="#c9a961" stroke-width="1"/>
<line x1="779.0" x2="799.0" y1="937.5" y2="937.5" stroke="#c9a961" stroke-opacity="0.55" stroke-width="1"/>
<line x1="798.5" x2="798.5" y1="937.5" y2="941" stroke="#c9a961" stroke-opacity="0.2" stroke-width="1"/>
<path d="M778.00,937.00V892.00H799.00V937.00Z" fill="rgba(74,222,128,0.7)"/>
<line x1="778.5" x2="778.5" y1="892.0" y2="937" stroke="#4ade80" stroke-width="1"/>
<line x1="779.0" x2="799.0" y1="892.5" y2="892.5" stroke="#4ade80" stroke-opacity="0.55" stroke-width="1"/>
<line x1="798.5" x2="798.5" y1="892.5" y2="937" stroke="#4ade80" stroke-opacity="0.2" stroke-width="1"/>
<path d="M778.00,892.00V846.00Q778.00,844.00 780.00,844.00H797.00Q799.00,844.00 799.00,846.00V892.00Z" fill="rgba(251,146,60,0.7)"/>
<path d="M778.5,892V846.0Q778.5,844.5 780.0,844.5H797.0Q798.5,844.5 798.5,846.0" fill="none" stroke="#fb923c" stroke-width="1"/>
<line x1="798.5" x2="798.5" y1="846.5" y2="892" stroke="#fb923c" stroke-opacity="0.2" stroke-width="1"/>
<text transform="translate(790.2,959.7) rotate(-41)" text-anchor="end" class="ax">Feb 27</text>
<path d="M807.00,941.00V903.00H828.00V941.00Z" fill="rgba(201,169,97,0.7)"/>
<line x1="807.5" x2="807.5" y1="903.0" y2="941" stroke="#c9a961" stroke-width="1"/>
<line x1="808.0" x2="828.0" y1="903.5" y2="903.5" stroke="#c9a961" stroke-opacity="0.55" stroke-width="1"/>
<line x1="827.5" x2="827.5" y1="903.5" y2="941" stroke="#c9a961" stroke-opacity="0.2" stroke-width="1"/>
<path d="M807.00,903.00V876.00H828.00V903.00Z" fill="rgba(74,222,128,0.7)"/>
<line x1="807.5" x2="807.5" y1="876.0" y2="903" stroke="#4ade80" stroke-width="1"/>
<line x1="808.0" x2="828.0" y1="876.5" y2="876.5" stroke="#4ade80" stroke-opacity="0.55" stroke-width="1"/>
<line x1="827.5" x2="827.5" y1="876.5" y2="903" stroke="#4ade80" stroke-opacity="0.2" stroke-width="1"/>
<path d="M807.00,876.00V866.00Q807.00,864.00 809.00,864.00H826.00Q828.00,864.00 828.00,866.00V876.00Z" fill="rgba(251,146,60,0.7)"/>
<path d="M807.5,876V866.0Q807.5,864.5 809.0,864.5H826.0Q827.5,864.5 827.5,866.0" fill="none" stroke="#fb923c" stroke-width="1"/>
<line x1="827.5" x2="827.5" y1="866.5" y2="876" stroke="#fb923c" stroke-opacity="0.2" stroke-width="1"/>
<text transform="translate(819.2,959.7) rotate(-41)" text-anchor="end" class="ax">Feb 28</text>
<path d="M836.00,941.00V892.00H857.00V941.00Z" fill="rgba(201,169,97,0.7)"/>
<line x1="836.5" x2="836.5" y1="892.0" y2="941" stroke="#c9a961" stroke-width="1"/>
<line x1="837.0" x2="857.0" y1="892.5" y2="892.5" stroke="#c9a961" stroke-opacity="0.55" stroke-width="1"/>
<line x1="856.5" x2="856.5" y1="892.5" y2="941" stroke="#c9a961" stroke-opacity="0.2" stroke-width="1"/>
<path d="M836.00,892.00V855.00H857.00V892.00Z" fill="rgba(74,222,128,0.7)"/>
<line x1="836.5" x2="836.5" y1="855.0" y2="892" stroke="#4ade80" stroke-width="1"/>
<line x1="837.0" x2="857.0" y1="855.5" y2="855.5" stroke="#4ade80" stroke-opacity="0.55" stroke-width="1"/>
<line x1="856.5" x2="856.5" y1="855.5" y2="892" stroke="#4ade80" stroke-opacity="0.2" stroke-width="1"/>
<path d="M836.00,855.00V842.00Q836.00,840.00 838.00,840.00H855.00Q857.00,840.00 857.00,842.00V855.00Z" fill="rgba(251,146,60,0.7)"/>
<path d="M836.5,855V842.0Q836.5,840.5 838.0,840.5H855.0Q856.5,840.5 856.5,842.0" fill="none" stroke="#fb923c" stroke-width="1"/>
<line x1="856.5" x2="856.5" y1="842.5" y2="855" stroke="#fb923c" stroke-opacity="0.2" stroke-width="1"/>
<text transform="translate(848.2,959.7) rotate(-41)" text-anchor="end" class="ax">Mar 1</text>
<path d="M865.00,941.00V920.00H886.00V941.00Z" fill="rgba(201,169,97,0.7)"/>
<line x1="865.5" x2="865.5" y1="920.0" y2="941" stroke="#c9a961" stroke-width="1"/>
<line x1="866.0" x2="886.0" y1="920.5" y2="920.5" stroke="#c9a961" stroke-opacity="0.55" stroke-width="1"/>
<line x1="885.5" x2="885.5" y1="920.5" y2="941" stroke="#c9a961" stroke-opacity="0.2" stroke-width="1"/>
<path d="M865.00,920.00V895.00H886.00V920.00Z" fill="rgba(74,222,128,0.7)"/>
<line x1="865.5" x2="865.5" y1="895.0" y2="920" stroke="#4ade80" stroke-width="1"/>
<line x1="866.0" x2="886.0" y1="895.5" y2="895.5" stroke="#4ade80" stroke-opacity="0.55" stroke-width="1"/>
<line x1="885.5" x2="885.5" y1="895.5" y2="920" stroke="#4ade80" stroke-opacity="0.2" stroke-width="1"/>
<path d="M865.00,895.00V869.00Q865.00,867.00 867.00,867.00H884.00Q886.00,867.00 886.00,869.00V895.00Z" fill="rgba(251,146,60,0.7)"/>
<path d="M865.5,895V869.0Q865.5,867.5 867.0,867.5H884.0Q885.5,867.5 885.5,869.0" fill="none" stroke="#fb923c" stroke-width="1"/>
<line x1="885.5" x2="885.5" y1="869.5" y2="895" stroke="#fb923c" stroke-opacity="0.2" stroke-width="1"/>
<text transform="translate(877.2,959.7) rotate(-41)" text-anchor="end" class="ax">Mar 2</text>
<path d="M894.00,941.00V940.00H915.00V941.00Z" fill="rgba(201,169,97,0.7)"/>
<line x1="894.5" x2="894.5" y1="940.0" y2="941" stroke="#c9a961" stroke-width="1"/>
<line x1="895.0" x2="915.0" y1="940.5" y2="940.5" stroke="#c9a961" stroke-opacity="0.55" stroke-width="1"/>
<line x1="914.5" x2="914.5" y1="940.5" y2="941" stroke="#c9a961" stroke-opacity="0.2" stroke-width="1"/>
<path d="M894.00,940.00V908.00H915.00V940.00Z" fill="rgba(74,222,128,0.7)"/>
<line x1="894.5" x2="894.5" y1="908.0" y2="940" stroke="#4ade80" stroke-width="1"/>
<line x1="895.0" x2="915.0" y1="908.5" y2="908.5" stroke="#4ade80" stroke-opacity="0.55" stroke-width="1"/>
<line x1="914.5" x2="914.5" y1="908.5" y2="940" stroke="#4ade80" stroke-opacity="0.2" stroke-width="1"/>
<path d="M894.00,908.00V879.00Q894.00,877.00 896.00,877.00H913.00Q915.00,877.00 915.00,879.00V908.00Z" fill="rgba(251,146,60,0.7)"/>
<path d="M894.5,908V879.0Q894.5,877.5 896.0,877.5H913.0Q914.5,877.5 914.5,879.0" fill="none" stroke="#fb923c" stroke-width="1"/>
<line x1="914.5" x2="914.5" y1="879.5" y2="908" stroke="#fb923c" stroke-opacity="0.2" stroke-width="1"/>
<text transform="translate(906.2,959.7) rotate(-41)" text-anchor="end" class="ax">Mar 3</text>
<path d="M923.00,941.00V938.00H944.00V941.00Z" fill="rgba(201,169,97,0.7)"/>
<line x1="923.5" x2="923.5" y1="938.0" y2="941" stroke="#c9a961" stroke-width="1"/>
<line x1="924.0" x2="944.0" y1="938.5" y2="938.5" stroke="#c9a961" stroke-opacity="0.55" stroke-width="1"/>
<line x1="943.5" x2="943.5" y1="938.5" y2="941" stroke="#c9a961" stroke-opacity="0.2" stroke-width="1"/>
<path d="M923.00,938.00V888.00H944.00V938.00Z" fill="rgba(74,222,128,0.7)"/>
<line x1="923.5" x2="923.5" y1="888.0" y2="938" stroke="#4ade80" stroke-width="1"/>
<line x1="924.0" x2="944.0" y1="888.5" y2="888.5" stroke="#4ade80" stroke-opacity="0.55" stroke-width="1"/>
<line x1="943.5" x2="943.5" y1="888.5" y2="938" stroke="#4ade80" stroke-opacity="0.2" stroke-width="1"/>
<path d="M923.00,888.00V812.00Q923.00,810.00 925.00,810.00H942.00Q944.00,810.00 944.00,812.00V888.00Z" fill="rgba(251,146,60,0.7)"/>
<path d="M923.5,888V812.0Q923.5,810.5 925.0,810.5H942.0Q943.5,810.5 943.5,812.0" fill="none" stroke="#fb923c" stroke-width="1"/>
<line x1="943.5" x2="943.5" y1="812.5" y2="888" stroke="#fb923c" stroke-opacity="0.2" stroke-width="1"/>
<text transform="translate(935.2,959.7) rotate(-41)" text-anchor="end" class="ax">Mar 4</text>
<path d="M952.00,941.00V940.00H973.00V941.00Z" fill="rgba(201,169,97,0.7)"/>
<line x1="952.5" x2="952.5" y1="940.0" y2="941" stroke="#c9a961" stroke-width="1"/>
<line x1="953.0" x2="973.0" y1="940.5" y2="940.5" stroke="#c9a961" stroke-opacity="0.55" stroke-width="1"/>
<line x1="972.5" x2="972.5" y1="940.5" y2="941" stroke="#c9a961" stroke-opacity="0.2" stroke-width="1"/>
<path d="M952.00,940.00V878.00H973.00V940.00Z" fill="rgba(74,222,128,0.7)"/>
<line x1="952.5" x2="952.5" y1="878.0" y2="940" stroke="#4ade80" stroke-width="1"/>
<line x1="953.0" x2="973.0" y1="878.5" y2="878.5" stroke="#4ade80" stroke-opacity="0.55" stroke-width="1"/>
<line x1="972.5" x2="972.5" y1="878.5" y2="940" stroke="#4ade80" stroke-opacity="0.2" stroke-width="1"/>
<path d="M952.00,878.00V811.00Q952.00,809.00 954.00,809.00H971.00Q973.00,809.00 973.00,811.00V878.00Z" fill="rgba(251,146,60,0.7)"/>
<path d="M952.5,878V811.0Q952.5,809.5 954.0,809.5H971.0Q972.5,809.5 972.5,811.0" fill="none" stroke="#fb923c" stroke-width="1"/>
<line x1="972.5" x2="972.5" y1="811.5" y2="878" stroke="#fb923c" stroke-opacity="0.2" stroke-width="1"/>
<text transform="translate(964.2,959.7) rotate(-41)" text-anchor="end" class="ax">Mar 5</text>
<path d="M981.00,941.00V921.00H1002.00V941.00Z" fill="rgba(201,169,97,0.7)"/>
<line x1="981.5" x2="981.5" y1="921.0" y2="941" stroke="#c9a961" stroke-width="1"/>
<line x1="982.0" x2="1002.0" y1="921.5" y2="921.5" stroke="#c9a961" stroke-opacity="0.55" stroke-width="1"/>
<line x1="1001.5" x2="1001.5" y1="921.5" y2="941" stroke="#c9a961" stroke-opacity="0.2" stroke-width="1"/>
<path d="M981.00,921.00V881.00H1002.00V921.00Z" fill="rgba(74,222,128,0.7)"/>
<line x1="981.5" x2="981.5" y1="881.0" y2="921" stroke="#4ade80" stroke-width="1"/>
<line x1="982.0" x2="1002.0" y1="881.5" y2="881.5" stroke="#4ade80" stroke-opacity="0.55" stroke-width="1"/>
<line x1="1001.5" x2="1001.5" y1="881.5" y2="921" stroke="#4ade80" stroke-opacity="0.2" stroke-width="1"/>
<path d="M981.00,881.00V791.00Q981.00,789.00 983.00,789.00H1000.00Q1002.00,789.00 1002.00,791.00V881.00Z" fill="rgba(251,146,60,0.7)"/>
<path d="M981.5,881V791.0Q981.5,789.5 983.0,789.5H1000.0Q1001.5,789.5 1001.5,791.0" fill="none" stroke="#fb923c" stroke-width="1"/>
<line x1="1001.5" x2="1001.5" y1="791.5" y2="881" stroke="#fb923c" stroke-opacity="0.2" stroke-width="1"/>
<text transform="translate(993.2,959.7) rotate(-41)" text-anchor="end" class="ax">Mar 6</text>
<path d="M1010.00,941.00V938.00H1031.00V941.00Z" fill="rgba(201,169,97,0.7)"/>
<line x1="1010.5" x2="1010.5" y1="938.0" y2="941" stroke="#c9a961" stroke-width="1"/>
<line x1="1011.0" x2="1031.0" y1="938.5" y2="938.5" stroke="#c9a961" stroke-opacity="0.55" stroke-width="1"/>
<line x1="1030.5" x2="1030.5" y1="938.5" y2="941" stroke="#c9a961" stroke-opacity="0.2" stroke-width="1"/>
<path d="M1010.00,938.00V907.00H1031.00V938.00Z" fill="rgba(74,222,128,0.7)"/>
<line x1="1010.5" x2="1010.5" y1="907.0" y2="938" stroke="#4ade80" stroke-width="1"/>
<line x1="1011.0" x2="1031.0" y1="907.5" y2="907.5" stroke="#4ade80" stroke-opacity="0.55" stroke-width="1"/>
<line x1="1030.5" x2="1030.5" y1="907.5" y2="938" stroke="#4ade80" stroke-opacity="0.2" stroke-width="1"/>
<path d="M1010.00,907.00V841.00Q1010.00,839.00 1012.00,839.00H1029.00Q1031.00,839.00 1031.00,841.00V907.00Z" fill="rgba(251,146,60,0.7)"/>
<path d="M1010.5,907V841.0Q1010.5,839.5 1012.0,839.5H1029.0Q1030.5,839.5 1030.5,841.0" fill="none" stroke="#fb923c" stroke-width="1"/>
<line x1="1030.5" x2="1030.5" y1="841.5" y2="907" stroke="#fb923c" stroke-opacity="0.2" stroke-width="1"/>
<text transform="translate(1022.2,959.7) rotate(-41)" text-anchor="end" class="ax">Mar 7</text>
<path d="M1039.00,941.00V922.00H1060.00V941.00Z" fill="rgba(201,169,97,0.7)"/>
<line x1="1039.5" x2="1039.5" y1="922.0" y2="941" stroke="#c9a961" stroke-width="1"/>
<line x1="1040.0" x2="1060.0" y1="922.5" y2="922.5" stroke="#c9a961" stroke-opacity="0.55" stroke-width="1"/>
<line x1="1059.5" x2="1059.5" y1="922.5" y2="941" stroke="#c9a961" stroke-opacity="0.2" stroke-width="1"/>
<path d="M1039.00,922.00V883.00H1060.00V922.00Z" fill="rgba(74,222,128,0.7)"/>
<line x1="1039.5" x2="1039.5" y1="883.0" y2="922" stroke="#4ade80" stroke-width="1"/>
<line x1="1040.0" x2="1060.0" y1="883.5" y2="883.5" stroke="#4ade80" stroke-opacity="0.55" stroke-width="1"/>
<line x1="1059.5" x2="1059.5" y1="883.5" y2="922" stroke="#4ade80" stroke-opacity="0.2" stroke-width="1"/>
<path d="M1039.00,883.00V825.00Q1039.00,823.00 1041.00,823.00H1058.00Q1060.00,823.00 1060.00,825.00V883.00Z" fill="rgba(251,146,60,0.7)"/>
<path d="M1039.5,883V825.0Q1039.5,823.5 1041.0,823.5H1058.0Q1059.5,823.5 1059.5,825.0" fill="none" stroke="#fb923c" stroke-width="1"/>
<line x1="1059.5" x2="1059.5" y1="825.5" y2="883" stroke="#fb923c" stroke-opacity="0.2" stroke-width="1"/>
<text transform="translate(1051.2,959.7) rotate(-41)" text-anchor="end" class="ax">Mar 8</text>
<path d="M1068.00,941.00V923.00H1089.00V941.00Z" fill="rgba(201,169,97,0.7)"/>
<line x1="1068.5" x2="1068.5" y1="923.0" y2="941" stroke="#c9a961" stroke-width="1"/>
<line x1="1069.0" x2="1089.0" y1="923.5" y2="923.5" stroke="#c9a961" stroke-opacity="0.55" stroke-width="1"/>
<line x1="1088.5" x2="1088.5" y1="923.5" y2="941" stroke="#c9a961" stroke-opacity="0.2" stroke-width="1"/>
<path d="M1068.00,923.00V914.00H1089.00V923.00Z" fill="rgba(74,222,128,0.7)"/>
<line x1="1068.5" x2="1068.5" y1="914.0" y2="923" stroke="#4ade80" stroke-width="1"/>
<line x1="1069.0" x2="1089.0" y1="914.5" y2="914.5" stroke="#4ade80" stroke-opacity="0.55" stroke-width="1"/>
<line x1="1088.5" x2="1088.5" y1="914.5" y2="923" stroke="#4ade80" stroke-opacity="0.2" stroke-width="1"/>
<path d="M1068.00,914.00V894.00Q1068.00,892.00 1070.00,892.00H1087.00Q1089.00,892.00 1089.00,894.00V914.00Z" fill="rgba(251,146,60,0.7)"/>
<path d="M1068.5,914V894.0Q1068.5,892.5 1070.0,892.5H1087.0Q1088.5,892.5 1088.5,894.0" fill="none" stroke="#fb923c" stroke-width="1"/>
<line x1="1088.5" x2="1088.5" y1="894.5" y2="914" stroke="#fb923c" stroke-opacity="0.2" stroke-width="1"/>
<text transform="translate(1080.2,959.7) rotate(-41)" text-anchor="end" class="ax">Mar 9</text>
<rect x="380.25" y="698.00" width="40" height="11.5" fill="rgba(201,169,97,0.7)" stroke="#c9a961" stroke-width="1"/>
<text x="425.75" y="706.60" class="lg">Claw Mart (net)</text>
<rect x="510.94" y="698.00" width="40" height="11.5" fill="rgba(74,222,128,0.7)" stroke="#4ade80" stroke-width="1"/>
<text x="556.44" y="706.60" class="lg">Felix Craft</text>
<rect x="616.56" y="698.00" width="40" height="11.5" fill="rgba(96,165,250,0.7)" stroke="#60a5fa" stroke-width="1"/>
<text x="662.06" y="706.60" class="lg">Polylogue</text>
<rect x="720.41" y="698.00" width="40" height="11.5" fill="rgba(251,146,60,0.7)" stroke="#fb923c" stroke-width="1"/>
<text x="765.91" y="706.60" class="lg">Felix CM Earnings</text>
</svg>
</body></html>
